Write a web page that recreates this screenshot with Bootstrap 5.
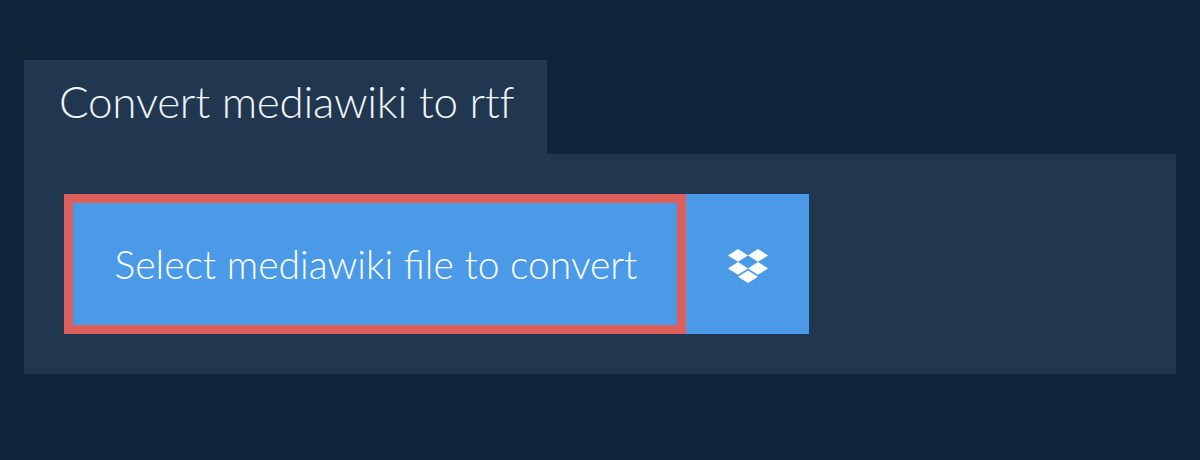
<!DOCTYPE html>
<html lang="en"><head><meta charset="utf-8">
<link href="https://cdn.jsdelivr.net/npm/bootstrap@5.3.0/dist/css/bootstrap.min.css" rel="stylesheet">
<style>
html,body{height:460px;overflow:hidden}
body{background:#0f253a;font-family:Lato,"Liberation Sans",sans-serif;color:#f1f5f9;padding:60px 24px 0}
.conv-tab{background:#20374f;width:523px;height:94px;padding:0 0 0 35px;font-size:44px;font-weight:300;line-height:83px;letter-spacing:-.26px;white-space:nowrap}
.conv-panel{background:#20374f;padding:40px;height:220px}
.conv-select{background:#4a9ae8;border:9px solid #dd5f5c;border-radius:0;width:622px;height:140px;color:#fff;font-size:39px;font-weight:300;padding:0 0 0 2px;white-space:nowrap}
.conv-drop{background:#4a9ae8;border:0;border-radius:0;width:123px;height:140px;padding:0}
.conv-select:hover{background:#4a9ae8;color:#fff}
</style></head><body>
<div class="d-flex"><div class="conv-tab">Convert mediawiki to rtf</div></div>
<div class="conv-panel"><div class="d-flex">
<button class="btn conv-select">Select mediawiki file to convert</button>
<button class="btn conv-drop d-flex align-items-center justify-content-center" aria-label="Dropbox"><svg width="40" height="38" viewBox="0 0 40 38" fill="#fff"><path d="M10 4 20 10.4 10 16.8 0 10.4zM30 4 40 10.4 30 16.8 20 10.4zM10 17 20 23.4 10 29.8 0 23.4zM30 17 40 23.4 30 29.8 20 23.4zM20 25.4 30 31.7 20 38 10 31.7z"/></svg></button>
</div></div>
<script src="https://cdn.jsdelivr.net/npm/bootstrap@5.3.0/dist/js/bootstrap.bundle.min.js"></script>
</body></html>
